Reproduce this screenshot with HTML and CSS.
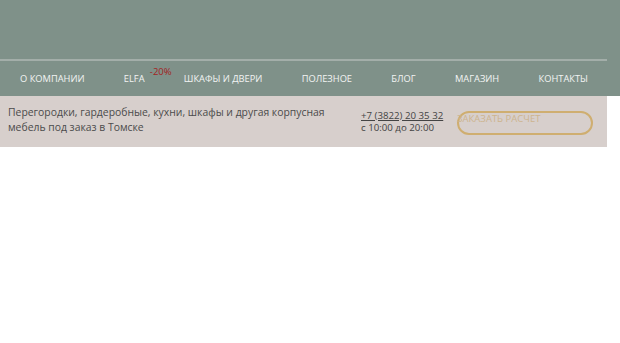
FILE: index.html
```html
<!DOCTYPE html>
<html lang="ru">
<head>
<meta charset="utf-8">
<title>Мебель под заказ</title>
<link rel="stylesheet" href="styles.css">
</head>
<body>
<header class="header">
  <div class="header-top"></div>
  <nav class="nav">
    <a class="nav-item" href="#">О компании</a>
    <a class="nav-item nav-elfa" href="#">Elfa<span class="badge">-20%</span></a>
    <a class="nav-item" href="#">Шкафы и двери</a>
    <a class="nav-item" href="#">Полезное</a>
    <a class="nav-item" href="#">Блог</a>
    <a class="nav-item" href="#">Магазин</a>
    <a class="nav-item" href="#">Контакты</a>
  </nav>
</header>
<section class="info">
  <p class="tagline">Перегородки, гардеробные, кухни, шкафы и другая корпусная мебель под заказ в Томске</p>
  <div class="contacts">
    <a class="phone" href="#">+7 (3822) 20 35 32</a>
    <span class="hours">с 10:00 до 20:00</span>
  </div>
  <a class="order" href="#">Заказать расчет</a>
</section>
</body>
</html>
```
FILE: styles.css
```css
* { box-sizing: border-box; }
html, body { margin: 0; padding: 0; background: #ffffff; }
body { font-family: "Open Sans", "Noto Sans", sans-serif; }

.header {
  background: #7f9189;
  height: 96px;
  padding-top: 59px;
}
.header-top {
  width: 607px;
  height: 2px;
  background: #a3aea9;
}
.nav {
  display: flex;
  justify-content: space-between;
  width: 588px;
  padding-left: 20px;
  margin-top: 11px;
}
.nav-item {
  position: relative;
  color: #f2f4f3;
  text-decoration: none;
  text-transform: uppercase;
  font-size: 9.3px;
  line-height: 14px;
}
.badge {
  position: absolute;
  left: 26px;
  top: -7px;
  color: #a31f1f;
  font-size: 9.5px;
  text-transform: none;
}

.info {
  width: 607px;
  height: 51px;
  background: #d7cfcc;
  display: flex;
  align-items: flex-start;
  padding: 9px 0 0 8px;
}
.tagline {
  margin: 0;
  width: 330px;
  flex: none;
  font-size: 10.4px;
  line-height: 15px;
  color: #4b4b4b;
}
.contacts {
  display: flex;
  flex-direction: column;
  margin-left: 23px;
  padding-top: 5px;
  font-size: 9.7px;
  line-height: 12px;
  color: #444444;
}
.phone { color: #444444; text-decoration: underline; }
.order {
  margin-left: auto;
  margin-right: 14px;
  margin-top: 6px;
  width: 136px;
  height: 24px;
  border: 2px solid #cfae70;
  border-radius: 12px;
  color: #cdb48e;
  text-decoration: none;
  text-transform: uppercase;
  font-size: 9.5px;
  line-height: 12px;
  padding-top: 0;
  text-indent: -2px;
}
```
